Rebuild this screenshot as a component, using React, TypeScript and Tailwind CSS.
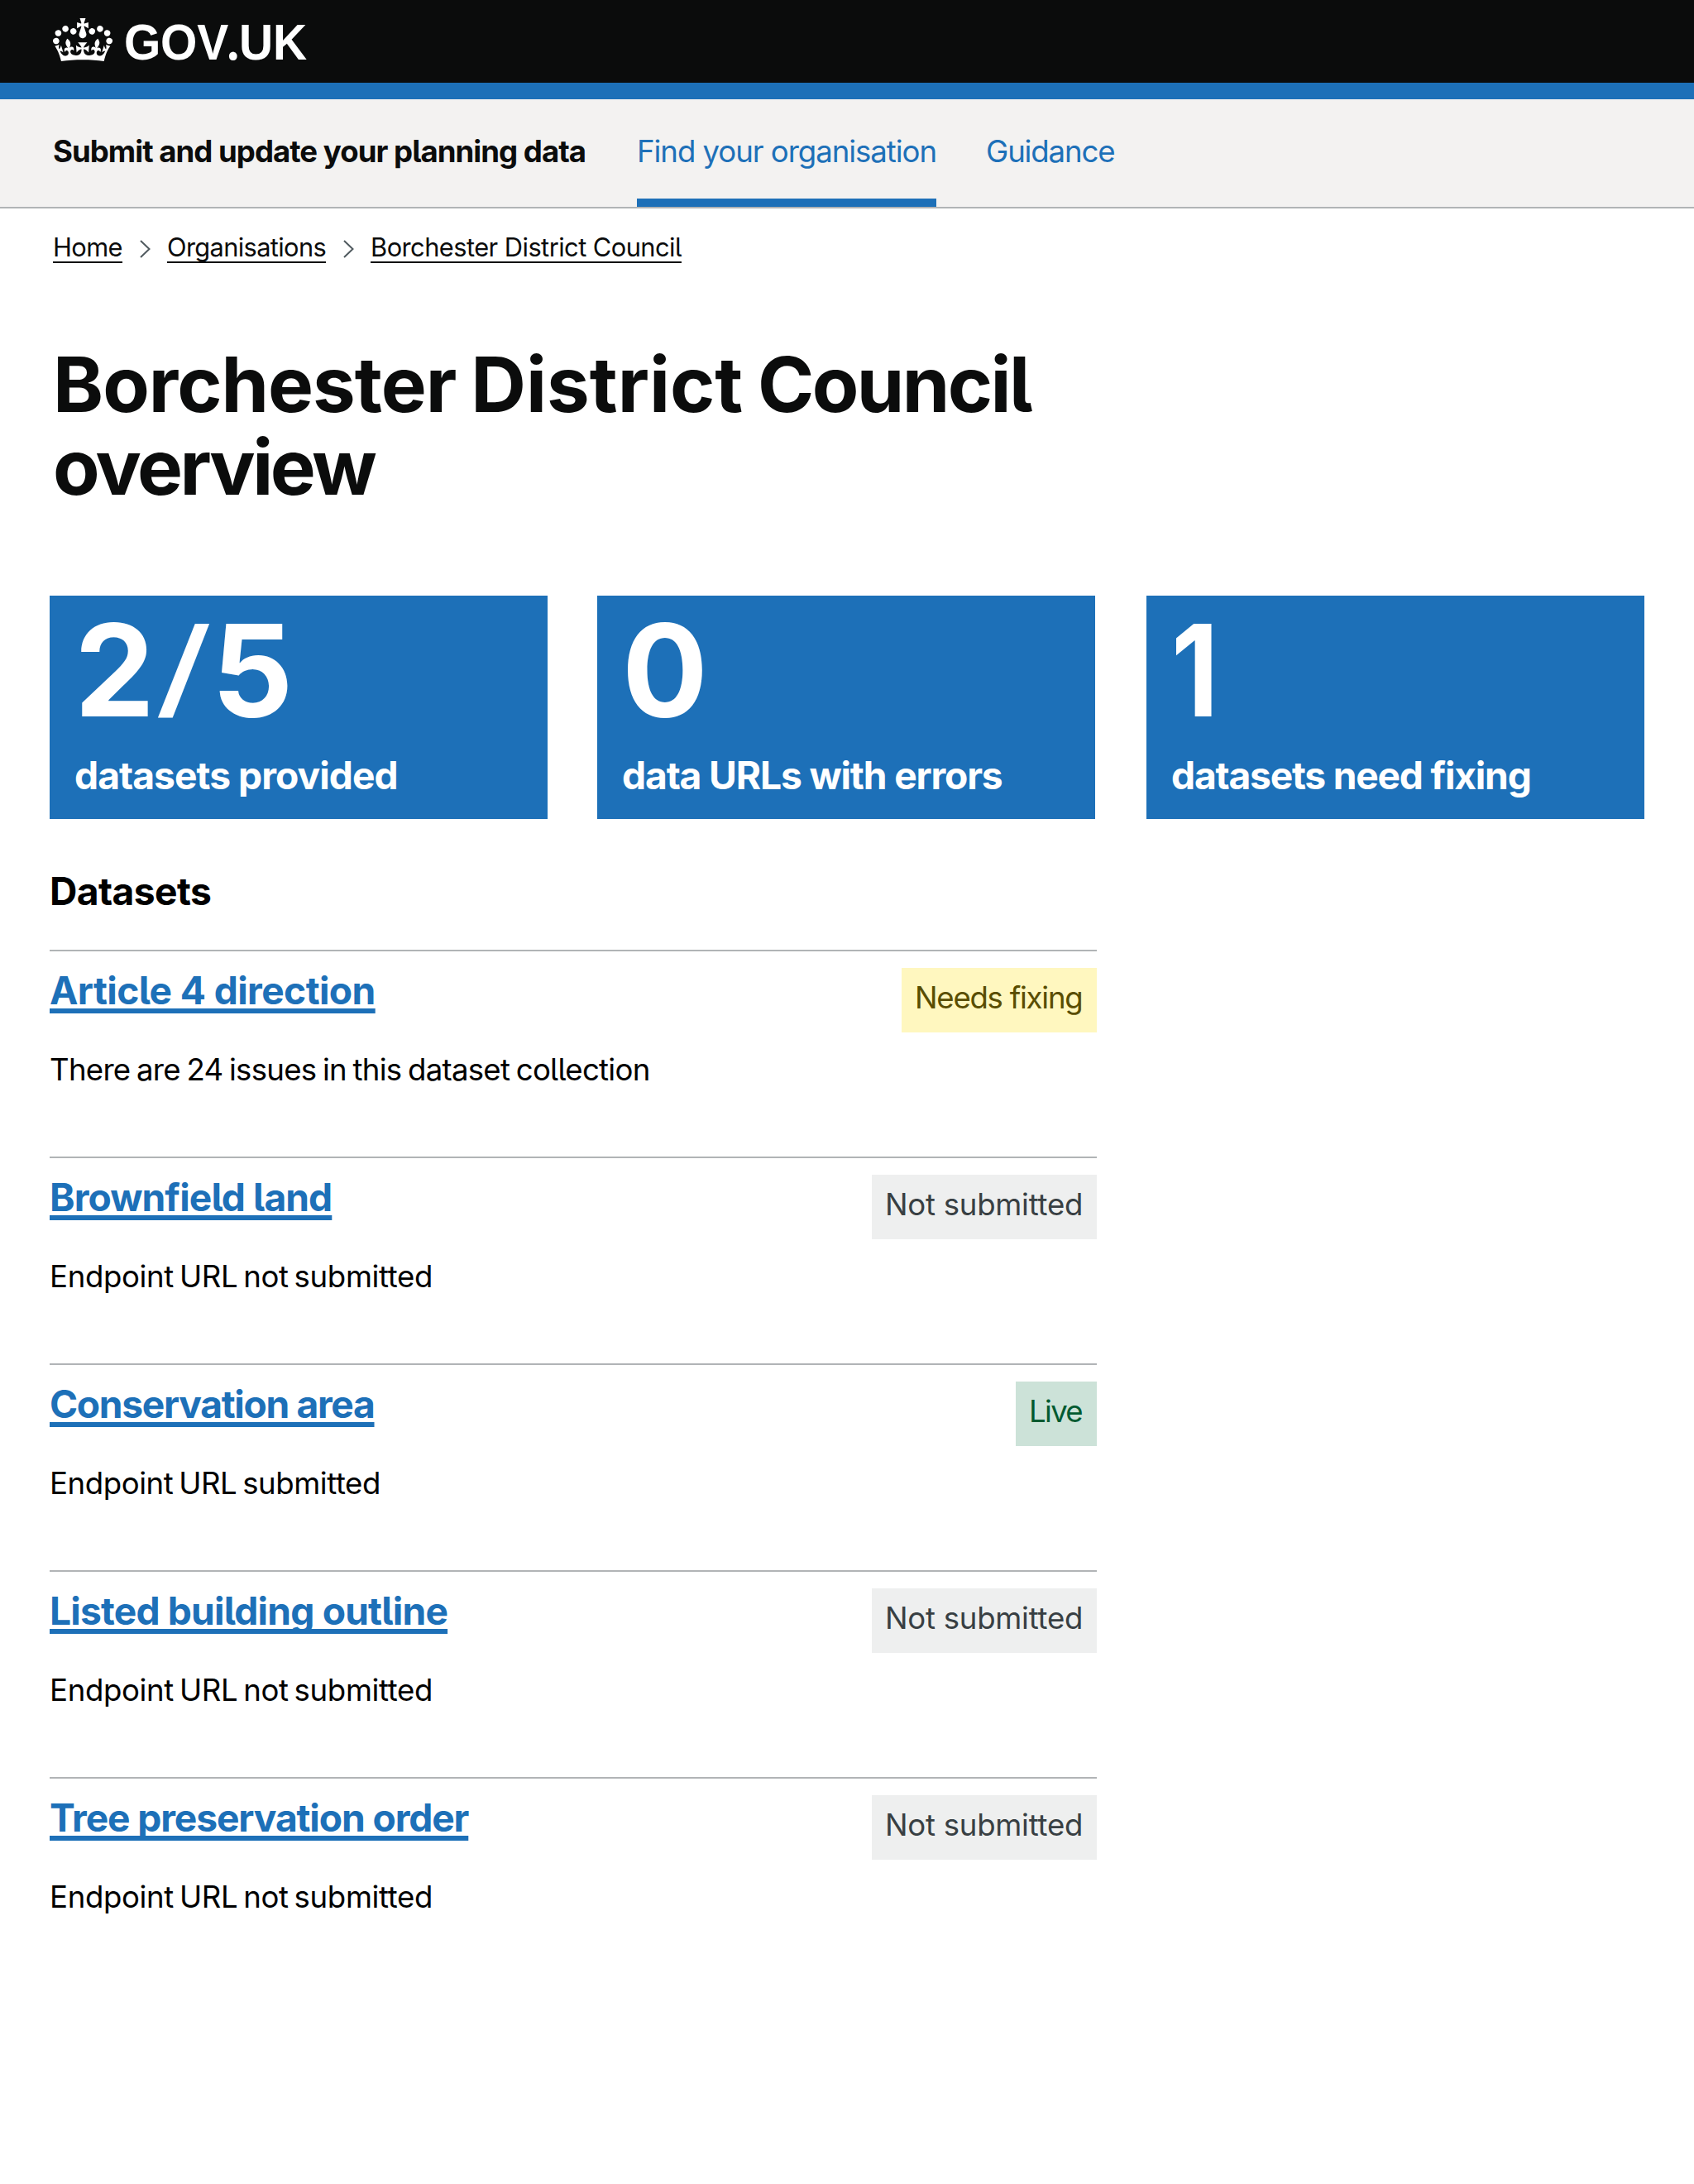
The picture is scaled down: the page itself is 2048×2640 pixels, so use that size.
import type { ReactNode } from "react";

const CROWN =
  "M25 30.2c3.5 1.5 7.7-.2 9.1-3.7 1.5-3.6-.2-7.8-3.9-9.2-3.6-1.4-7.6.3-9.1 3.9-1.4 3.5.3 7.5 3.9 9zM9 39.5c3.6 1.5 7.8-.2 9.2-3.7 1.5-3.6-.2-7.8-3.9-9.1-3.6-1.5-7.6.2-9.1 3.8-1.4 3.5.3 7.5 3.8 9zM4.4 57.2c3.5 1.5 7.7-.2 9.1-3.8 1.5-3.6-.2-7.7-3.9-9.1-3.5-1.5-7.6.3-9.1 3.8-1.4 3.5.3 7.6 3.9 9.1zm38.3-21.4c3.5 1.5 7.7-.2 9.1-3.8 1.5-3.6-.2-7.7-3.9-9.1-3.6-1.5-7.6.3-9.1 3.8-1.3 3.6.4 7.7 3.9 9.1zm64.4-5.6c-3.6 1.5-7.8-.2-9.1-3.7-1.5-3.6.2-7.8 3.8-9.2 3.6-1.4 7.7.3 9.2 3.9 1.3 3.5-.4 7.5-3.9 9zm15.9 9.3c-3.6 1.5-7.7-.2-9.1-3.7-1.5-3.6.2-7.8 3.7-9.1 3.6-1.5 7.7.2 9.2 3.8 1.5 3.5-.3 7.5-3.8 9zm4.7 17.7c-3.6 1.5-7.8-.2-9.2-3.8-1.5-3.6.2-7.7 3.9-9.1 3.6-1.5 7.7.3 9.2 3.8 1.3 3.5-.4 7.6-3.9 9.1zM89.3 35.8c-3.6 1.5-7.8-.2-9.2-3.8-1.4-3.6.2-7.7 3.9-9.1 3.6-1.5 7.7.3 9.2 3.8 1.4 3.6-.3 7.7-3.9 9.1zM69.7 17.7l8.9 4.7V9.3l-8.9 2.8c-.2-.3-.5-.6-.9-.9L72.4 0H59.6l3.5 11.2c-.3.3-.6.5-.9.9l-8.8-2.8v13.1l8.8-4.7c.3.3.6.7.9.9l-5 15.4v.1c-.2.8-.4 1.6-.4 2.4 0 4.1 3.1 7.5 7 8.1h.2c.3 0 .7.1 1 .1.4 0 .7 0 1-.1h.2c4-.6 7.1-4.1 7.1-8.1 0-.8-.1-1.7-.4-2.4V34l-5.1-15.4c.4-.2.7-.6 1-.9zM66 92.8c16.9 0 32.8 1.1 47.1 3.2 4-16.9 8.9-26.7 14-33.5l-9.6-3.4c1 4.9 1.1 7.2 0 10.2-1.5-1.4-3-4.3-4.2-8.7L108.6 76c2.8-2 5-3.2 7.5-3.3-4.4 9.4-10 11.9-13.6 11.2-4.3-.8-6.3-4.6-5.6-7.9 1-4.7 5.7-5.9 8-.5 4.3-8.7-3-11.4-7.6-8.8 7.1-7.2 7.9-13.5 2.1-21.1-8 6.1-8.1 12.3-4.5 20.8-4.7-5.4-12.1-2.5-9.5 6.2 3.4-5.2 7.9-2 7.2 3.1-.6 4.3-6.4 7.8-13.5 7.2-10.3-.9-10.9-8-11.2-13.8 2.5-.5 7.1 1.8 11 7.3L80.2 60c-4.1 4.4-8 5.3-12.3 5.4 1.4-4.4 8-11.6 8-11.6H55.5s6.4 7.2 7.9 11.6c-4.2-.1-8-1-12.3-5.4l1.4 16.4c3.9-5.5 8.5-7.7 10.9-7.3-.3 5.8-.9 12.8-11.1 13.8-7.2.6-12.9-2.9-13.5-7.2-.7-5 3.8-8.3 7.1-3.1 2.7-8.7-4.6-11.6-9.4-6.2 3.7-8.5 3.6-14.7-4.6-20.8-5.8 7.6-5 13.9 2.2 21.1-4.7-2.6-11.9.1-7.7 8.8 2.3-5.5 7.1-4.2 8.1.5.7 3.3-1.3 7.1-5.7 7.9-3.5.7-9-1.8-13.5-11.2 2.5.1 4.7 1.3 7.5 3.3l-4.7-15.4c-1.2 4.4-2.7 7.2-4.3 8.7-1.1-3-.9-5.3 0-10.2l-9.5 3.4c5 6.9 9.9 16.7 14 33.5 14.8-2.1 30.8-3.2 47.7-3.2z";

function Header() {
  return (
    <header className="flex h-[120px] items-start border-b-[20px] border-[#1d70b8] bg-[#0b0c0c] pl-16 text-white">
      <svg className="mt-[22px] h-[52px] w-[72px]" viewBox="0 0 132 96" preserveAspectRatio="none" fill="currentColor" aria-hidden="true">
        <path d={CROWN} />
      </svg>
      <span className="mt-5 ml-[14px] origin-left scale-x-[0.935] font-['Liberation_Sans',sans-serif] text-[61px] leading-[60px] font-bold tracking-[-0.3px]">
        GOV<span className="-mr-[2px] -ml-[4px] font-['Inter',sans-serif]">.</span>UK
      </span>
    </header>
  );
}

function ServiceNav() {
  return (
    <nav className="flex h-[132px] border-b-2 border-[#b1b4b6] bg-[#f3f2f1] pl-16 text-[36.6px] leading-[48px] whitespace-nowrap">
      <a className="w-[706px] pt-[39px] font-bold tracking-[-0.98px]">Submit and update your planning data</a>
      <a className="w-[362px] border-b-[10px] border-[#1d70b8] pt-[39px] tracking-[-1.04px] text-[#1d70b8]">Find your organisation</a>
      <a className="ml-[60px] pt-[39px] tracking-[-1.15px] text-[#1d70b8]">Guidance</a>
    </nav>
  );
}

function Chevron() {
  return (
    <svg className="mt-[11px] mr-5 ml-[21px] h-[22px] w-[13px]" viewBox="0 0 13 22" fill="none" stroke="#505a5f" strokeWidth="2" aria-hidden="true">
      <path d="M1 1l10.500 10L1 21" />
    </svg>
  );
}

function Crumb({ children, className }: { children: ReactNode; className: string }) {
  return (
    <a className={`underline decoration-2 underline-offset-[6px] [text-decoration-skip-ink:none] ${className}`}>{children}</a>
  );
}

type Stat = { value: ReactNode; label: string; cardClass: string; labelClass: string };

const stats: Stat[] = [
  {
    value: (
      <>
        2
        <span className="mr-[5px] ml-[4px] inline-block w-[60px] origin-left scale-x-[1.45] font-['Liberation_Sans',sans-serif] font-normal">/</span>
        5
      </>
    ),
    label: "datasets provided",
    cardClass: "",
    labelClass: "tracking-[-0.95px]",
  },
  { value: "0", label: "data URLs with errors", cardClass: "ml-[60px]", labelClass: "tracking-[-1.15px]" },
  {
    value: <span className="inline-block origin-left scale-x-[0.86]">1</span>,
    label: "datasets need fixing",
    cardClass: "ml-[62px]",
    labelClass: "tracking-[-1.22px]",
  },
];

const tagStyles = {
  "Needs fixing": "w-[236px] bg-[#fff7bf] text-[#594d00] tracking-[-1.25px]",
  "Not submitted": "w-[272px] bg-[#eeefef] text-[#383f43] tracking-[-0.25px]",
  Live: "w-[98px] bg-[#cce2d8] text-[#005a30] tracking-[-1.68px]",
};

type Dataset = { name: string; detail: string; tag: keyof typeof tagStyles; nameClass: string; detailClass: string };

const datasets: Dataset[] = [
  { name: "Article 4 direction", detail: "There are 24 issues in this dataset collection", tag: "Needs fixing", nameClass: "tracking-[-0.61px]", detailClass: "tracking-[-0.72px] [word-spacing:-2px]" },
  { name: "Brownfield land", detail: "Endpoint URL not submitted", tag: "Not submitted", nameClass: "tracking-[-0.92px]", detailClass: "tracking-[-0.35px] [word-spacing:-3px]" },
  { name: "Conservation area", detail: "Endpoint URL submitted", tag: "Live", nameClass: "tracking-[-1.32px]", detailClass: "tracking-[-0.43px] [word-spacing:-3px]" },
  { name: "Listed building outline", detail: "Endpoint URL not submitted", tag: "Not submitted", nameClass: "tracking-[-0.82px]", detailClass: "tracking-[-0.35px] [word-spacing:-3px]" },
  { name: "Tree preservation order", detail: "Endpoint URL not submitted", tag: "Not submitted", nameClass: "tracking-[-1.12px]", detailClass: "tracking-[-0.35px] [word-spacing:-3px]" },
];

export default function App() {
  return (
    <div className="min-h-[2640px] w-full bg-white font-['Inter',sans-serif] text-[#0b0c0c] [font-feature-settings:'cv05']">
      <Header />
      <ServiceNav />
      <div className="flex pt-[27px] pl-16 text-[30.8px] leading-10 whitespace-nowrap">
        <Crumb className="tracking-[-0.57px]">Home</Crumb>
        <Chevron />
        <Crumb className="tracking-[-0.65px]">Organisations</Crumb>
        <Chevron />
        <Crumb className="tracking-[-0.54px]">Borchester District Council</Crumb>
      </div>
      <main className="px-[60px]">
        <h1 className="mt-[95px] ml-1 text-[92.4px] leading-[100px] font-bold tracking-[-1px] [word-spacing:-3px]">
          Borchester <span className="tracking-[0px]">District</span> <span className="tracking-[-2.6px]">Council</span>
          <br />
          <span className="tracking-[-3.4px]">overview</span>
        </h1>
        <div className="mt-[106px] flex">
          {stats.map((s) => (
            <div key={s.label} className={`h-[270px] w-[602px] bg-[#1d70b8] px-[30px] pt-[10px] font-bold text-white ${s.cardClass}`}>
              <div className="h-[160px] text-[154px] leading-[160px]">{s.value}</div>
              <div className={`mt-[17px] text-[46.2px] leading-[60px] whitespace-nowrap ${s.labelClass}`}>{s.label}</div>
            </div>
          ))}
        </div>
        <h2 className="mt-[57px] text-[46.2px] leading-[60px] font-bold tracking-[-0.6px] text-black">Datasets</h2>
        <ul className="mt-[41px] w-[1266px]">
          {datasets.map((d) => (
            <li key={d.name} className="flex h-[250px] items-start justify-between border-t-2 border-[#b1b4b6] whitespace-nowrap">
              <div className="pt-[17px]">
                <h3 className="text-[46.2px] leading-[60px] font-bold">
                  <a className={`text-[#1d70b8] underline decoration-[6px] underline-offset-[5px] [text-decoration-skip-ink:none] ${d.nameClass}`}>{d.name}</a>
                </h3>
                <p className={`mt-[41px] text-[36.6px] leading-[50px] text-black ${d.detailClass}`}>{d.detail}</p>
              </div>
              <strong className={`mt-5 h-[78px] px-4 pt-[11px] text-[36.6px] leading-[50px] font-normal ${tagStyles[d.tag]}`}>{d.tag}</strong>
            </li>
          ))}
        </ul>
      </main>
    </div>
  );
}
